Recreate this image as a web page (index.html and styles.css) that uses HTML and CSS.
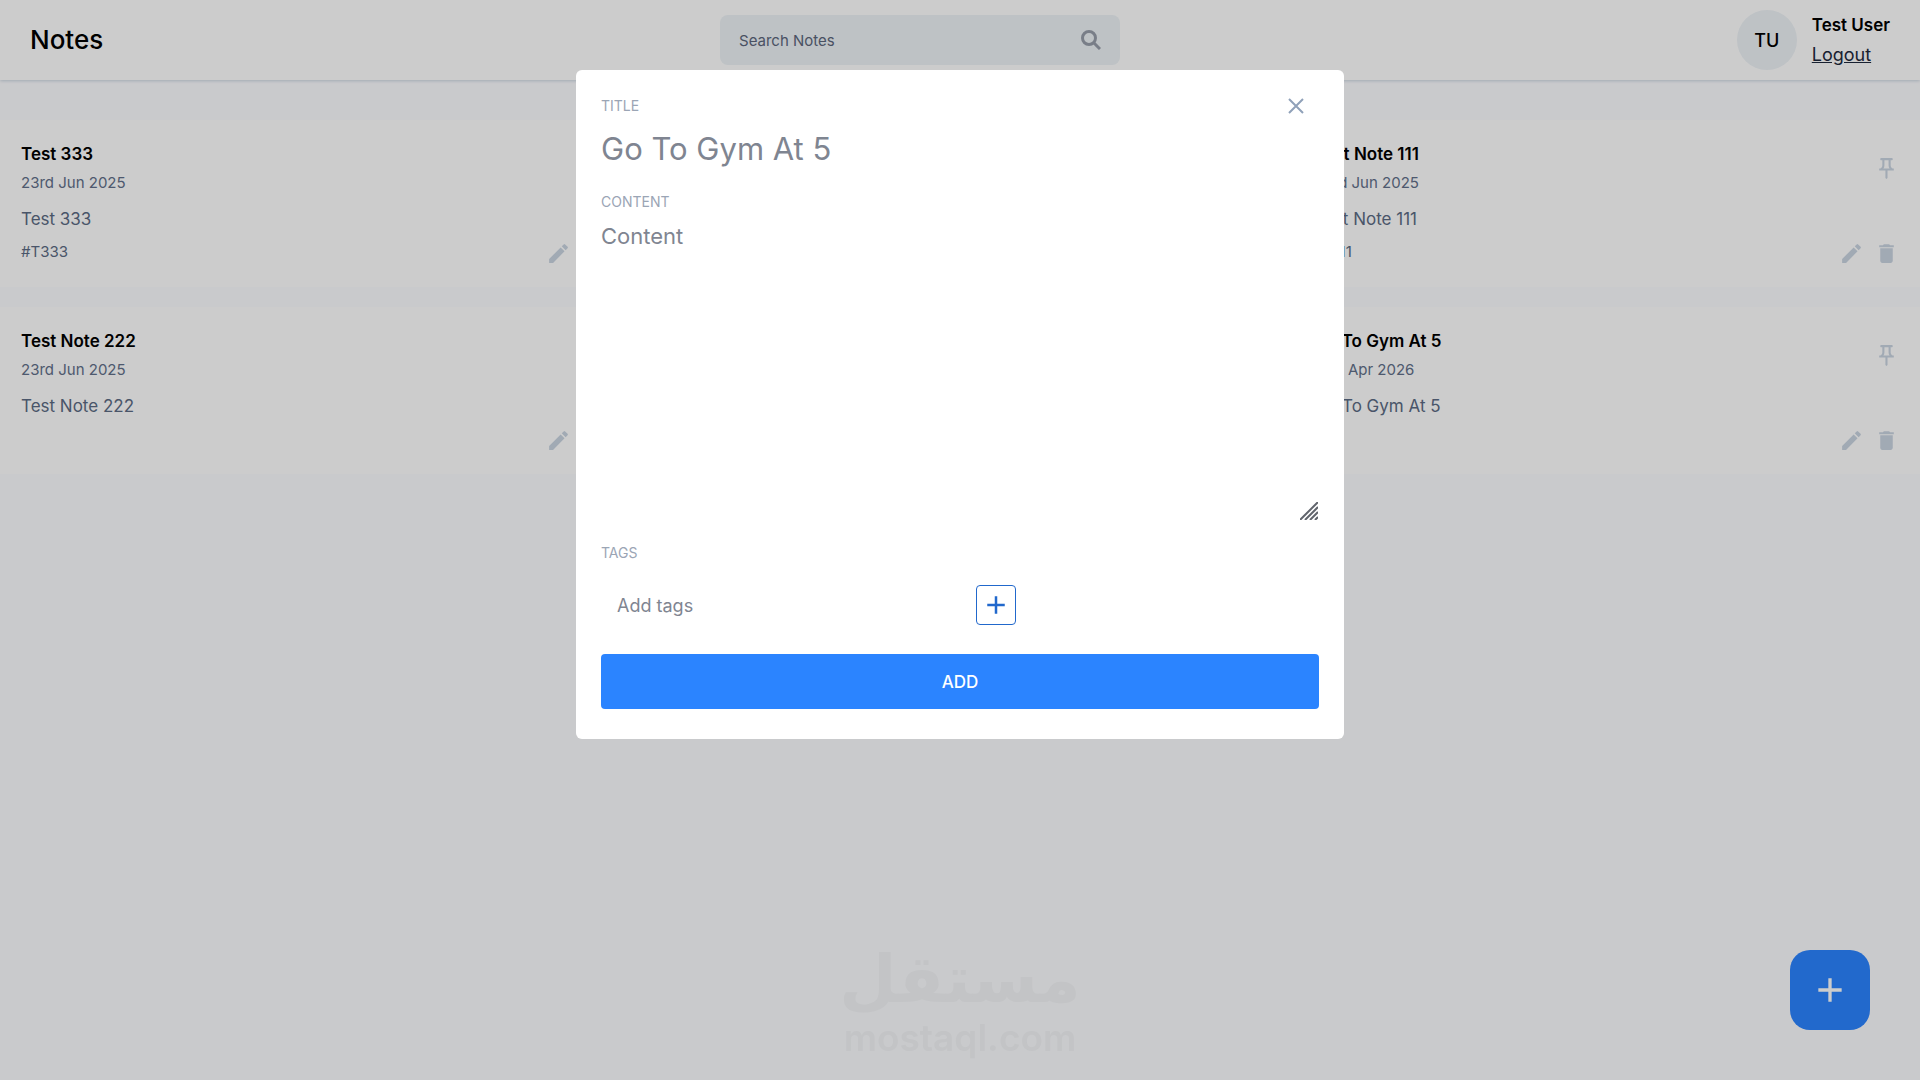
FILE: index.html
```html
<!DOCTYPE html>
<html lang="en">
<head>
<meta charset="utf-8">
<title>Notes</title>
<meta name="viewport" content="width=device-width, initial-scale=1">
<link rel="stylesheet" href="styles.css">
</head>
<body>
<svg class="sprite" aria-hidden="true">
  <symbol id="pencil" viewBox="0 0 24 24"><path d="M3 17.25V21h3.75L17.81 9.94l-3.75-3.75L3 17.25zM20.71 7.04a1 1 0 0 0 0-1.41l-2.34-2.34a1 1 0 0 0-1.41 0l-1.83 1.83 3.75 3.75 1.83-1.83z"/></symbol>
  <symbol id="trash" viewBox="0 0 24 24"><path d="M6 19c0 1.100.9 2 2 2h8c1.100 0 2-.9 2-2V7H6v12zM19 4h-3.500l-1-1h-5l-1 1H5v2h14V4z"/></symbol>
  <symbol id="pin" viewBox="0 0 24 24"><path d="M14 4v5c0 1.120.37 2.160 1 3H9c.65-.86 1-1.900 1-3V4h4m3-2H7c-.55 0-1 .45-1 1s.45 1 1 1h1v5c0 1.660-1.340 3-3 3v2h5.970v7l1 1 1-1v-7H19v-2c-1.660 0-3-1.340-3-3V4h1c.55 0 1-.45 1-1s-.45-1-1-1z"/></symbol>
  <symbol id="plus" viewBox="0 0 24 24"><path d="M19 13h-6v6h-2v-6H5v-2h6V5h2v6h6v2z"/></symbol>
</svg>

<header class="navbar">
  <h1 class="brand">Notes</h1>
  <form class="search" role="search">
    <input class="search-input" type="text" placeholder="Search Notes" aria-label="Search Notes">
    <button class="icon-button" type="button" aria-label="Search">
      <svg class="search-icon" viewBox="0 0 20 20"><circle cx="8" cy="8" r="6.500"/><path d="M12.500 12.500 19 19"/></svg>
    </button>
  </form>
  <div class="profile">
    <div class="avatar">TU</div>
    <div>
      <p class="user-name">Test User</p>
      <a class="logout" href="#">Logout</a>
    </div>
  </div>
</header>

<main class="notes">
  <article class="note">
    <div class="note-head"><div><h2 class="note-title">Test 333</h2><time class="note-date">23rd Jun 2025</time></div></div>
    <p class="note-text">Test 333</p>
    <div class="note-foot"><span class="note-tags">#T333</span>
      <div class="actions"><button class="icon-button" aria-label="Edit"><svg class="icon"><use href="#pencil"/></svg></button><button class="icon-button" aria-label="Delete"><svg class="icon"><use href="#trash"/></svg></button></div>
    </div>
  </article>
  <article class="note"></article>
  <article class="note">
    <div class="note-head"><div><h2 class="note-title">Test Note 111</h2><time class="note-date">23rd Jun 2025</time></div><button class="icon-button" aria-label="Pin"><svg class="icon"><use href="#pin"/></svg></button></div>
    <p class="note-text">Test Note 111</p>
    <div class="note-foot"><span class="note-tags">#T111</span>
      <div class="actions"><button class="icon-button" aria-label="Edit"><svg class="icon"><use href="#pencil"/></svg></button><button class="icon-button" aria-label="Delete"><svg class="icon"><use href="#trash"/></svg></button></div>
    </div>
  </article>
  <article class="note">
    <div class="note-head"><div><h2 class="note-title">Test Note 222</h2><time class="note-date">23rd Jun 2025</time></div></div>
    <p class="note-text">Test Note 222</p>
    <div class="note-foot"><span class="note-tags"></span>
      <div class="actions"><button class="icon-button" aria-label="Edit"><svg class="icon"><use href="#pencil"/></svg></button><button class="icon-button" aria-label="Delete"><svg class="icon"><use href="#trash"/></svg></button></div>
    </div>
  </article>
  <article class="note"></article>
  <article class="note">
    <div class="note-head"><div><h2 class="note-title">Go To Gym At 5</h2><time class="note-date">19th Apr 2026</time></div><button class="icon-button" aria-label="Pin"><svg class="icon"><use href="#pin"/></svg></button></div>
    <p class="note-text">Go To Gym At 5</p>
    <div class="note-foot"><span class="note-tags"></span>
      <div class="actions"><button class="icon-button" aria-label="Edit"><svg class="icon"><use href="#pencil"/></svg></button><button class="icon-button" aria-label="Delete"><svg class="icon"><use href="#trash"/></svg></button></div>
    </div>
  </article>
</main>

<button class="fab" aria-label="Add note"><svg class="fab-icon"><use href="#plus"/></svg></button>

<div class="overlay">
  <form class="modal" role="dialog" aria-label="Add note">
    <div class="field-head">
      <label class="label" for="title">TITLE</label>
      <button class="close" type="button" aria-label="Close"><svg class="close-icon" viewBox="0 0 16 16"><path d="M1 1l14 14M15 1 1 15"/></svg></button>
    </div>
    <input class="title-input" id="title" type="text" placeholder="Go To Gym At 5">
    <label class="label" for="content">CONTENT</label>
    <div class="content-field">
      <textarea class="content-input" id="content" placeholder="Content"></textarea>
      <svg class="grip" viewBox="0 0 18 18" aria-hidden="true"><path d="M0 18 18 0M5 18 18 5M10 18l8-8M15 18l3-3"/></svg>
    </div>
    <label class="label" for="tags">TAGS</label>
    <div class="tag-row">
      <input class="tag-input" id="tags" type="text" placeholder="Add tags">
      <button class="tag-add" type="button" aria-label="Add tag"><svg class="tag-icon"><use href="#plus"/></svg></button>
    </div>
    <button class="submit" type="button">ADD</button>
  </form>
</div>

<div class="watermark">
  <span class="watermark-ar" lang="ar" dir="rtl">مستقل</span>
  <span class="watermark-en">mostaql.com</span>
</div>
</body>
</html>
```
FILE: styles.css
```css
* { box-sizing: border-box; }
body {
  margin: 0;
  min-height: 100vh;
  background: #fcfdff;
  color: #000;
  font-family: Inter, "Liberation Sans", sans-serif;
  font-size: 17px;
}
h1, h2, p { margin: 0; }
button, input, textarea { font: inherit; border: 0; outline: 0; background: transparent; padding: 0; }
button { display: flex; align-items: center; justify-content: center; }
input::placeholder, textarea::placeholder { color: inherit; opacity: 1; }
.sprite { position: absolute; width: 0; height: 0; }

.navbar {
  display: flex;
  align-items: center;
  justify-content: space-between;
  height: 80px;
  padding: 0 30px;
  background: #fff;
  box-shadow: 0 1px 3px #cbd5e1;
}
.brand { font-size: 26px; line-height: 36px; font-weight: 500; }
.search {
  display: flex;
  align-items: center;
  width: 400px;
  height: 50px;
  padding: 0 19px;
  border-radius: 8px;
  background: #eef3f7;
}
.search-input { flex: 1; min-width: 0; font-size: 15px; color: #5c667c; }
.search-icon { width: 20px; height: 20px; fill: none; stroke: #989eaa; stroke-width: 3; }
.profile { display: flex; align-items: center; gap: 15px; }
.avatar {
  display: grid;
  place-items: center;
  width: 60px;
  height: 60px;
  border-radius: 50%;
  background: #eef3f7;
  font-size: 18px;
  font-weight: 500;
}
.user-name { font-size: 17px; line-height: 29px; font-weight: 600; }
.logout { display: block; width: max-content; font-size: 18px; line-height: 29px; color: #1d293d; text-decoration: underline; }

.notes { display: grid; grid-template-columns: repeat(3, 1fr); gap: 20px; padding-top: 40px; }
.note { display: flex; flex-direction: column; height: 167px; padding: 20px 21px; background: #fff; }
.note-head { display: flex; align-items: center; justify-content: space-between; }
.note-title { font-size: 17px; line-height: 28px; font-weight: 600; }
.note-date { display: block; font-size: 15px; line-height: 29px; color: #62708a; }
.note-text { margin-top: 8px; line-height: 28px; color: #5c6b84; }
.note-foot { display: flex; align-items: start; justify-content: space-between; margin-top: 5px; font-size: 15px; line-height: 28px; color: #5c6b84; }
.actions { display: flex; gap: 10px; padding-top: 3px; }
.icon-button { color: #cad5e2; }
.icon { width: 25px; height: 25px; fill: currentColor; }

.fab {
  position: fixed;
  right: 50px;
  bottom: 50px;
  width: 80px;
  height: 80px;
  border-radius: 20px;
  background: #2b84ff;
  color: #fff;
}
.fab-icon { width: 40px; height: 40px; fill: currentColor; }

.overlay { position: fixed; inset: 0; padding-top: 70px; background: rgba(0, 0, 0, .2); }
.modal {
  display: flex;
  flex-direction: column;
  width: 40%;
  margin: 0 auto;
  padding: 24px 25px 30px;
  border-radius: 6px;
  background: #fff;
}
.field-head { display: flex; align-items: center; justify-content: space-between; height: 24px; }
.label { font-size: 14px; line-height: 24px; color: #9ba5b5; }
.close { margin-right: 15px; }
.close-icon { width: 16px; height: 16px; fill: none; stroke: #90a1b9; stroke-width: 2; }
.title-input { height: 45px; margin: 8px 0 19px; font-size: 31px; color: #7f8591; }
.content-field { position: relative; margin: 7px 0 20px; }
.content-input { display: block; width: 100%; height: 300px; font-size: 22px; line-height: 30px; color: #7f8591; resize: none; }
.grip { position: absolute; right: 1px; bottom: 1px; width: 18px; height: 18px; fill: none; stroke: #60646c; stroke-width: 2; }
.tag-row { display: flex; align-items: center; gap: 20px; margin: 20px 0 29px; }
.tag-input { width: 355px; height: 40px; padding: 0 16px; font-size: 18px; color: #7f8591; }
.tag-add { width: 40px; height: 40px; border: 1px solid #2168cc; border-radius: 4px; color: #2168cc; }
.tag-icon { width: 30px; height: 30px; fill: currentColor; }
.submit { height: 55px; border-radius: 4px; background: #2b84ff; color: #fff; font-weight: 500; }

.watermark {
  position: fixed;
  left: 0;
  right: 0;
  bottom: 20px;
  display: flex;
  flex-direction: column;
  align-items: center;
  color: #c3c4c6;
  pointer-events: none;
}
.watermark-ar { font-family: "DejaVu Sans", sans-serif; font-size: 66px; line-height: 72px; font-weight: 700; }
.watermark-en { font-family: Inter, sans-serif; font-size: 37px; line-height: 44px; font-weight: 600; }
```
